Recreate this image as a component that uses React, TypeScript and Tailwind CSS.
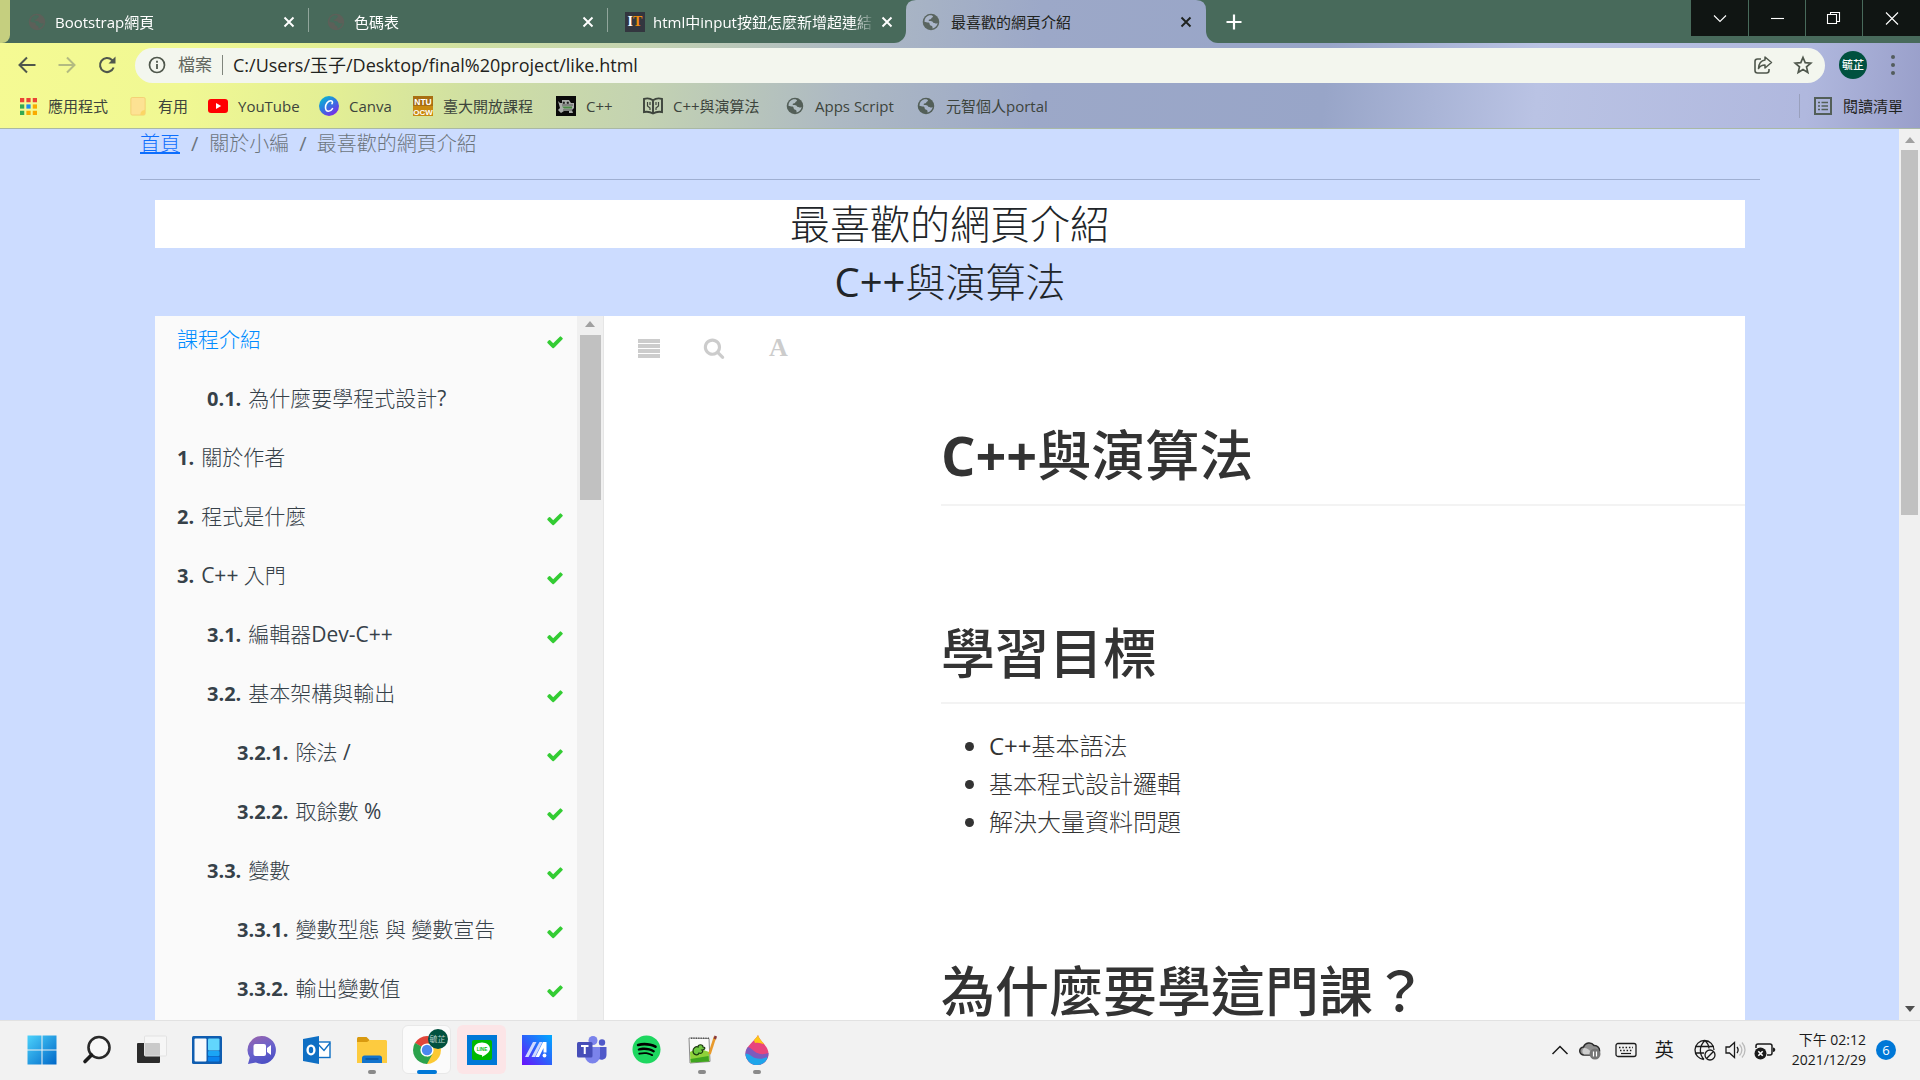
import type { ReactNode } from "react";
import { FaSpotify } from "react-icons/fa";

/* ---------- small glyphs ---------- */

function Globe({ className, land }: { className: string; land: string }) {
  return (
    <svg viewBox="0 0 20 20" className={className} aria-hidden="true">
      <circle cx="10" cy="10" r="9.2" fill="currentColor" />
      <path
        fill={land}
        d="M8 2.600c2-.6 4.600.1 4.200 1.600-.3 1-1.700.8-1.900 1.900-.2 1-1.400.9-2.300 1.200-1 .4-.8 1.600.2 1.700 1.600.1 3.400-.1 4 1.300.3.9 1.500.8 2.300 1.200.6.4 1.800.2 2.900-.4-.5 3-2.800 5.400-5.600 6.100-.3-1 .3-1.800-.6-2.600-1-.8-2.200-.4-2.600-1.700-.3-1.200-.2-2-1.400-2.300-1.500-.3-3.200-.3-4.500-1C2.700 6.400 4.900 3.500 8 2.600Z"
      />
    </svg>
  );
}

function CloseX({ className }: { className: string }) {
  return (
    <svg viewBox="0 0 12 12" className={className} aria-hidden="true">
      <path d="M1.500 1.500l9 9m0-9l-9 9" stroke="currentColor" strokeWidth="1.900" fill="none" />
    </svg>
  );
}

function ItLogo() {
  return (
    <span className="flex h-5 w-5 items-center justify-center bg-[#33363f] font-['Liberation_Serif',serif] text-sm leading-none font-bold text-white">
      I<span className="text-[#f08c10]">T</span>
    </span>
  );
}

/* Sets the Latin runs of a mixed title in their own weight. */
function Mixed({ text, latin }: { text: string; latin: string }) {
  return (
    <span className="whitespace-pre">
      {text.split(/([ -~]+)/).map((run, i) =>
        i % 2 ? (
          <span key={i} className={latin}>
            {run}
          </span>
        ) : (
          run
        ),
      )}
    </span>
  );
}

/* ---------- tab strip ---------- */

function Tab({ icon, title, last }: { icon: ReactNode; title: string; last?: boolean }) {
  return (
    <div className={`relative flex h-full items-center pl-[17px] ${last ? "w-[298px]" : "w-[299px]"}`}>
      <span className="flex w-5 shrink-0 justify-center">{icon}</span>
      <span className="ml-2 w-[222px] overflow-hidden [mask-image:linear-gradient(to_right,#000_90%,transparent)] text-[15px] leading-6 whitespace-nowrap text-white">
        {title}
      </span>
      <button aria-label="關閉分頁" className="ml-[6px] text-white">
        <CloseX className="h-3 w-3" />
      </button>
      {!last && <span className="absolute top-2 right-0 h-6 w-px bg-[#91a69c]" />}
    </div>
  );
}

function TabStrip() {
  return (
    <div className="flex h-[43px]">
      <div className="flex rounded-br-xl bg-[#486a5b]">
        <div className="h-[43px] w-[10px] rounded-br-lg bg-[#c5cf7f]" />
        <Tab icon={<Globe className="h-[18px] w-[18px] text-[#5c6059]" land="#486a5b" />} title="Bootstrap網頁" />
        <Tab icon={<Globe className="h-[18px] w-[18px] text-[#5c6059]" land="#486a5b" />} title="色碼表" />
        <Tab icon={<ItLogo />} title="html中input按鈕怎麼新增超連結" last />
      </div>
      <div className="relative flex w-[300px] items-center pl-4">
        <svg viewBox="0 0 10 10" className="absolute top-0 left-0 h-[10px] w-[10px]" aria-hidden="true">
          <path d="M0 0H10Q0 0 0 10Z" fill="#486a5b" />
        </svg>
        <svg viewBox="0 0 10 10" className="absolute top-0 right-0 h-[10px] w-[10px]" aria-hidden="true">
          <path d="M10 0H0Q10 0 10 10Z" fill="#486a5b" />
        </svg>
        <Globe className="h-[18px] w-[18px] text-[#5a6560]" land="#abb6ca" />
        <span className="ml-[11px] w-[222px] text-[15px] leading-6 whitespace-nowrap text-[#1f2320]">最喜歡的網頁介紹</span>
        <button aria-label="關閉分頁" className="ml-[7px] text-[#1f2320]">
          <CloseX className="h-3 w-3" />
        </button>
      </div>
      <div className="flex flex-1 items-center rounded-bl-xl bg-[#486a5b]">
        <button aria-label="新增分頁" className="ml-5 text-white">
          <svg viewBox="0 0 16 16" className="h-4 w-4">
            <path d="M8 .5v15M.5 8h15" stroke="currentColor" strokeWidth="2.200" />
          </svg>
        </button>
        <div className="ml-auto flex gap-px self-start text-white">
          {[
            ["搜尋分頁", "M9 12.500l6 6 6-6"],
            ["最小化", "M9 15.500h13"],
            ["還原", "M8.500 11.500h9v9h-9zM11.500 11.500v-2h9v9h-3"],
            ["關閉", "M9 9.500l12 12m0-12l-12 12"],
          ].map(([label, d]) => (
            <button key={label} aria-label={label} className="flex h-9 w-14 items-center justify-center bg-[#101513] last:w-[57px] first:w-[57px]">
              <svg viewBox="0 0 30 30" className="h-[30px] w-[30px]">
                <path d={d} stroke="currentColor" strokeWidth="1.100" fill="none" />
              </svg>
            </button>
          ))}
        </div>
      </div>
    </div>
  );
}

/* ---------- toolbar ---------- */

function Toolbar() {
  return (
    <div className="flex h-11 items-center pr-[17px] pl-[17px] text-[#4f574c]">
      <button aria-label="上一頁" className="w-5">
        <svg viewBox="0 0 20 20" className="h-5 w-5">
          <path d="M18.500 10H3M10 2.500L2.500 10l7.500 7.500" stroke="currentColor" strokeWidth="2" fill="none" />
        </svg>
      </button>
      <button aria-label="下一頁" className="ml-5 w-5 text-[#b3ba81]">
        <svg viewBox="0 0 20 20" className="h-5 w-5">
          <path d="M1.500 10H17M10 2.500l7.500 7.500-7.500 7.500" stroke="currentColor" strokeWidth="2" fill="none" />
        </svg>
      </button>
      <button aria-label="重新載入" className="ml-5 w-5">
        <svg viewBox="0 0 20 20" className="h-5 w-5">
          <path d="M16.600 12.500a7 7 0 1 1-1.600-7.400l2 2" stroke="currentColor" strokeWidth="2.100" fill="none" />
          <path d="M18.500 1.500v7h-7z" fill="currentColor" />
        </svg>
      </button>
      <div className="ml-[18px] flex h-[35px] flex-1 items-center rounded-full bg-[#f3f6ee] pr-3 pl-[13px]">
        <svg viewBox="0 0 18 18" className="h-[18px] w-[18px]" aria-hidden="true">
          <circle cx="9" cy="9" r="7.500" stroke="currentColor" strokeWidth="1.700" fill="none" />
          <path d="M9 8v5M9 4.800v1.900" stroke="currentColor" strokeWidth="1.800" />
        </svg>
        <label htmlFor="address" className="ml-3 text-[17px] leading-6 text-[#62675f]">
          檔案
        </label>
        <span className="mx-[10px] h-5 w-px bg-[#80857c]" />
        <input
          id="address"
          className="min-w-0 flex-1 bg-transparent text-lg leading-6 text-[#1f2320] outline-none"
          defaultValue="C:/Users/玉子/Desktop/final%20project/like.html"
        />
        <button aria-label="分享" className="mr-5">
          <svg viewBox="0 0 20 20" className="h-5 w-5">
            <path d="M8 4H4.500A2.500 2.500 0 0 0 2 6.500v9A2.500 2.500 0 0 0 4.500 18h9a2.500 2.500 0 0 0 2.500-2.500V14" stroke="currentColor" strokeWidth="1.600" fill="none" />
            <path d="M12 2l6.500 5.500L12 13v-3c-3 0-5 1-6.500 3.500C5.800 8.800 8 5.500 12 5z" stroke="currentColor" strokeWidth="1.500" fill="none" strokeLinejoin="round" />
          </svg>
        </button>
        <button aria-label="加入書籤">
          <svg viewBox="0 0 20 20" className="h-5 w-5">
            <path d="M10 2.500l2.200 5.200 5.600.5-4.300 3.700 1.300 5.500L10 14.500l-4.800 2.900 1.300-5.500L2.200 8.200l5.600-.5z" stroke="currentColor" strokeWidth="1.700" fill="none" />
          </svg>
        </button>
      </div>
      <button className="ml-[14px] h-7 w-7 rounded-full bg-[#00513f] text-center text-[11px] leading-7 font-medium whitespace-nowrap text-white">
        毓芷
      </button>
      <button aria-label="選單" className="ml-[16px] flex w-5 flex-col items-center gap-1">
        <span className="h-1 w-1 rounded-full bg-[#535d5d]" />
        <span className="h-1 w-1 rounded-full bg-[#535d5d]" />
        <span className="h-1 w-1 rounded-full bg-[#535d5d]" />
      </button>
    </div>
  );
}

/* ---------- bookmarks ---------- */

function Bookmark({ icon, label, className }: { icon: ReactNode; label: string; className: string }) {
  return (
    <a href="#" className={`flex shrink-0 items-center ${className}`}>
      <span className="flex w-5 justify-center">{icon}</span>
      <span className="ml-[10px] text-[15px] leading-6 whitespace-nowrap">{label}</span>
    </a>
  );
}

function AppsIcon() {
  const colours = ["#ea4335", "#ea4335", "#ea4335", "#34a853", "#1a8cf0", "#f9ab00", "#34a853", "#f9ab00", "#f9ab00"];
  return (
    <svg viewBox="0 0 16 16" className="h-[17px] w-[17px]" aria-hidden="true">
      {colours.map((c, i) => (
        <rect key={i} x={(i % 3) * 6} y={Math.floor(i / 3) * 6} width="4" height="4" fill={c} />
      ))}
    </svg>
  );
}

function Bookmarks() {
  return (
    <nav className="flex h-[42px] items-center border-b border-[#a9b8a5] pr-[17px] pb-[3px] pl-[18px] text-[#3d443c]">
      <Bookmark className="w-[110px]" icon={<AppsIcon />} label="應用程式" />
      <Bookmark
        className="w-[80px]"
        icon={
          <svg viewBox="0 0 16 20" className="h-[19px] w-4">
            <rect x=".5" y=".5" width="15" height="18.500" rx="1.500" fill="#fde293" stroke="#f3cf73" />
            <path d="M10.500 19c0-3 1-4.500 4.800-5.500V17c0 1.500-1 2-4.800 2Z" fill="#fbd565" />
          </svg>
        }
        label="有用"
      />
      <Bookmark
        className="w-[111px]"
        icon={
          <svg viewBox="0 0 20 14" className="h-[14px] w-5">
            <rect width="20" height="14" rx="3" fill="#f00" />
            <path d="M8 4l5.200 3L8 10z" fill="#fff" />
          </svg>
        }
        label="YouTube"
      />
      <Bookmark
        className="w-[94px]"
        icon={
          <svg viewBox="0 0 20 20" className="h-5 w-5">
            <defs>
              <linearGradient id="canva" x1="0" y1="0" x2=".7" y2="1">
                <stop offset="0" stopColor="#00c4cc" />
                <stop offset=".5" stopColor="#2b7de0" />
                <stop offset="1" stopColor="#7d2ae8" />
              </linearGradient>
            </defs>
            <circle cx="10" cy="10" r="10" fill="url(#canva)" />
            <path d="M13 7.600c.8-.9.700-2.800-1.100-2.900C9 4.600 6.500 8 6.500 11.300c0 2.500 1.200 4 3 4 1.700 0 3-1.100 4-2.700" stroke="#fff" strokeWidth="1.600" fill="none" strokeLinecap="round" />
          </svg>
        }
        label="Canva"
      />
      <Bookmark
        className="w-[143px]"
        icon={
          <svg viewBox="0 0 20 20" className="h-5 w-5">
            <rect width="20" height="20" fill="#a86e12" />
            <rect y="10" width="20" height="10" fill="#c98a10" />
            <text x="10" y="8.500" textAnchor="middle" fontSize="8.500" fontWeight="700" fontFamily="Liberation Sans" fill="#fff">NTU</text>
            <text x="10" y="18.500" textAnchor="middle" fontSize="8" fontWeight="700" fontFamily="Liberation Sans" fill="#fff">OCW</text>
          </svg>
        }
        label="臺大開放課程"
      />
      <Bookmark
        className="w-[87px]"
        icon={
          <svg viewBox="0 0 20 20" className="h-5 w-5">
            <rect width="20" height="20" fill="#0a0a0a" />
            <path d="M2 5l2 2h2V4h7l2 3h3v5l-2 2 1 3h-4v-2H8l-3 2-3-3 2-2z" fill="#a9ada9" />
            <path d="M6 10.500h10v2H8z" fill="#4a8a45" />
            <path d="M7 6h1.500v1.500H7zM11 6h1.500v1.500H11zM6 9h11M7 14h9" fill="#222" stroke="#222" strokeWidth=".6" />
          </svg>
        }
        label="C++"
      />
      <Bookmark
        className="w-[142px]"
        icon={
          <svg viewBox="0 0 20 18" className="h-[18px] w-5">
            <path d="M1 2c3-1 6-.8 9 1.200C13 1.200 16 1 19 2v13c-3-.6-6-.4-9 1.500C7 14.600 4 14.400 1 15zM10 3v13" stroke="currentColor" strokeWidth="1.900" fill="none" />
            <path d="M4.500 5v4l2.500 2v2M7 5v3M15.500 5v4L13 11v2M13 5v3" stroke="currentColor" strokeWidth="1.200" fill="none" />
          </svg>
        }
        label="C++與演算法"
      />
      <Bookmark className="w-[131px]" icon={<Globe className="h-[18px] w-[18px] text-[#535f58]" land="#b0bdc2" />} label="Apps Script" />
      <Bookmark className="" icon={<Globe className="h-[18px] w-[18px] text-[#535f58]" land="#a6b2c8" />} label="元智個人portal" />
      <div className="ml-auto flex items-center border-l border-[#99a0bd] pl-[13px] text-[#1f2320]">
        <svg viewBox="0 0 20 20" className="h-5 w-5 text-[#535f58]" aria-hidden="true">
          <path d="M2 2h16v16H2z" stroke="currentColor" strokeWidth="2" fill="none" />
          <path d="M5 6.500h2M5 10h2M5 13.500h2M8.500 6.500H15M8.500 10H15M8.500 13.500H15" stroke="currentColor" strokeWidth="1.500" />
        </svg>
        <button className="ml-[10px] text-[15px] leading-6">閱讀清單</button>
      </div>
    </nav>
  );
}

/* ---------- course book ---------- */

type Chapter = { no?: string; title: string; level: 0 | 1 | 2; done?: boolean };

const chapters: Chapter[] = [
  { title: "課程介紹", level: 0, done: true },
  { no: "0.1.", title: "為什麼要學程式設計?", level: 1 },
  { no: "1.", title: "關於作者", level: 0 },
  { no: "2.", title: "程式是什麼", level: 0, done: true },
  { no: "3.", title: "C++ 入門", level: 0, done: true },
  { no: "3.1.", title: "編輯器Dev-C++", level: 1, done: true },
  { no: "3.2.", title: "基本架構與輸出", level: 1, done: true },
  { no: "3.2.1.", title: "除法 /", level: 2, done: true },
  { no: "3.2.2.", title: "取餘數 %", level: 2, done: true },
  { no: "3.3.", title: "變數", level: 1, done: true },
  { no: "3.3.1.", title: "變數型態 與 變數宣告", level: 2, done: true },
  { no: "3.3.2.", title: "輸出變數值", level: 2, done: true },
];

const indent = ["pl-[22px]", "pl-[52px]", "pl-[82px]"];

function Check() {
  return (
    <svg viewBox="0 0 1792 1792" className="mt-1 ml-auto h-[18px] w-[18px] text-[#33cc33]" role="img" aria-label="已完成">
      <path
        fill="currentColor"
        d="M1671 566q0 40-28 68l-724 724-136 136q-28 28-68 28t-68-28l-136-136-362-362q-28-28-28-68t28-68l136-136q28-28 68-28t68 28l294 295 656-657q28-28 68-28t68 28l136 136q28 28 28 68z"
      />
    </svg>
  );
}

const heading = "text-[54px] leading-[76px] font-medium";

function Book() {
  return (
    <section className="mx-[15px] mt-[10px] flex min-h-0 flex-1 overflow-hidden bg-white">
      <ul className="w-[422px] shrink-0 bg-[#fafafa]">
        {chapters.map((c) => (
          <li key={c.title} className="h-[59px]">
            <a
              href="#"
              className={`flex h-12 items-center pr-[13px] text-[21px] font-light ${indent[c.level]} ${c.no ? "text-[#364149]" : "text-[#008cff]"}`}
            >
              {c.no && <b className="mr-[7px] text-xl font-bold">{c.no}</b>}
              <Mixed text={c.title} latin="font-normal" />
              {c.done && <Check />}
            </a>
          </li>
        ))}
      </ul>
      <div className="flex w-[27px] shrink-0 flex-col items-center border-r border-[#e6e6e6] bg-[#f0f0f0] pt-[5px]">
        <svg viewBox="0 0 10 6" className="h-[6px] w-[10px]" aria-hidden="true">
          <path d="M0 6L5 0l5 6z" fill="#a0a0a0" />
        </svg>
        <div className="mt-2 h-[165px] w-[21px] bg-[#c1c1c1]" />
      </div>
      <article className="min-w-0 flex-1 text-[#333]">
        <div className="flex h-16 items-center text-[#ccc]">
          <button aria-label="目錄" className="ml-[34px] flex w-[22px] flex-col gap-px">
            <span className="h-[4px] bg-[#ccc]" />
            <span className="h-[4px] bg-[#ccc]" />
            <span className="h-[4px] bg-[#ccc]" />
            <span className="h-[4px] bg-[#ccc]" />
          </button>
          <button aria-label="搜尋" className="ml-[43px]">
            <svg viewBox="0 0 1792 1792" className="h-[22px] w-[22px]">
              <path
                fill="currentColor"
                d="M1216 832q0-185-131.500-316.500t-316.500-131.500-316.500 131.500-131.500 316.500 131.500 316.500 316.500 131.500 316.500-131.500 131.500-316.500zm512 832q0 52-38 90t-90 38q-54 0-90-38l-343-342q-179 124-399 124-143 0-273.500-55.500t-225-150-150-225-55.500-273.500 55.500-273.500 150-225 225-150 273.500-55.500 273.500 55.500 225 150 150 225 55.500 273.500q0 220-124 399l343 343q37 37 37 90z"
              />
            </svg>
          </button>
          <button className="ml-[44px] font-['Liberation_Serif',serif] text-[26px] leading-none font-bold">A</button>
        </div>
        <div className="ml-[337px]">
          <h2 className={`mt-[26px] border-b-2 border-[#f3f3f3] pt-[11px] pb-[11px] ${heading}`}>
            <Mixed text="C++與演算法" latin="font-bold" />
          </h2>
          <h2 className={`mt-[98px] border-b-2 border-[#f3f3f3] pt-[11px] pb-[11px] ${heading}`}>學習目標</h2>
          <ul className="mt-[23px] list-disc pl-12 text-2xl leading-[38px] font-light">
            <li>
              <Mixed text="C++基本語法" latin="font-normal" />
            </li>
            <li>基本程式設計邏輯</li>
            <li>解決大量資料問題</li>
          </ul>
          <h2 className={`mt-[101px] pt-[11px] whitespace-nowrap ${heading}`}>為什麼要學這門課？</h2>
        </div>
      </article>
    </section>
  );
}

function PageView() {
  return (
    <div className="flex min-h-0 flex-1">
      <main className="flex min-h-0 min-w-0 flex-1 flex-col bg-[#ccdcff] pr-[139px] pl-[140px] text-[#212529]">
        <nav aria-label="breadcrumb" className="flex h-[51px] shrink-0 items-start border-b border-[#9fafd2] text-xl leading-[30px] font-light text-[#6c757d]">
          <a href="#" className="text-[#0d6efd] underline">首頁</a>
          <span className="px-[11px] font-normal">/</span>
          <span>關於小編</span>
          <span className="px-[10px] font-normal">/</span>
          <span>最喜歡的網頁介紹</span>
        </nav>
        <h1 className="mx-[15px] mt-5 shrink-0 bg-white text-center text-[40px] leading-[48px] font-light">最喜歡的網頁介紹</h1>
        <h1 className="mt-[10px] shrink-0 text-center text-[40px] leading-[48px] font-light">
          <Mixed text="C++與演算法" latin="font-normal" />
        </h1>
        <Book />
      </main>
      <div className="flex w-[21px] flex-col items-center bg-[#f0f0f0] py-2">
        <svg viewBox="0 0 10 6" className="h-[6px] w-[10px]" aria-hidden="true">
          <path d="M0 6L5 0l5 6z" fill="#a0a0a0" />
        </svg>
        <div className="mt-[7px] h-[365px] w-[17px] bg-[#c1c1c1]" />
        <svg viewBox="0 0 10 6" className="mt-auto h-[6px] w-[10px]" aria-hidden="true">
          <path d="M0 0l5 6 5-6z" fill="#505050" />
        </svg>
      </div>
    </div>
  );
}

/* ---------- taskbar ---------- */

function TaskIcon({ label, children, tile, mark }: { label: string; children: ReactNode; tile?: string; mark?: string }) {
  return (
    <button aria-label={label} className="relative flex h-full w-[55px] items-center justify-center">
      <span className={`flex h-[49px] w-[49px] items-center justify-center rounded-md ${tile ?? ""}`}>{children}</span>
      {mark && <span className={`absolute bottom-[4px] h-1 rounded-full ${mark}`} />}
    </button>
  );
}

const big = "h-[30px] w-[30px]";

function Taskbar() {
  return (
    <footer className="flex h-[60px] shrink-0 items-center border-t border-[#e2e2e2] bg-[#f2f2f2] pb-[2px] pl-[14px] text-[#1b1b1b]">
      <TaskIcon label="開始">
        <svg viewBox="0 0 30 30" className={big}>
          <defs>
            <linearGradient id="win" x1="0" y1="0" x2="1" y2="1">
              <stop offset="0" stopColor="#4cd2fb" />
              <stop offset="1" stopColor="#0067c8" />
            </linearGradient>
          </defs>
          <path d="M.5.5h14v14h-14zM15.500.5h14v14h-14zM.5 15.500h14v14h-14zM15.500 15.500h14v14h-14z" fill="url(#win)" />
        </svg>
      </TaskIcon>
      <TaskIcon label="搜尋">
        <svg viewBox="0 0 30 30" className={big}>
          <circle cx="17" cy="12.500" r="10.500" stroke="#2a2a2a" strokeWidth="2.600" fill="#f8f8f8" />
          <path d="M9.500 20L3 26.500" stroke="#1b1b1b" strokeWidth="3.600" strokeLinecap="round" />
        </svg>
      </TaskIcon>
      <TaskIcon label="工作檢視">
        <svg viewBox="0 0 30 30" className={big}>
          <rect y="8" width="23" height="20" rx="1" fill="#2b2b2b" />
          <rect x="7.500" y="1" width="22" height="20" rx="1" fill="#f7f7f7" fillOpacity=".78" stroke="#e2e2e2" />
        </svg>
      </TaskIcon>
      <TaskIcon label="小工具">
        <svg viewBox="0 0 30 30" className={big}>
          <rect y="1" width="30" height="28" rx="1.500" fill="#0f5db0" />
          <rect x="2.500" y="3.500" width="12" height="23" rx="1" fill="#f7f9fb" />
          <rect x="16" y="3.500" width="11.500" height="12" rx="1" fill="#62d6fd" />
          <rect x="16" y="16" width="11.500" height="5" rx="1" fill="#1ba5f5" />
          <rect x="16" y="21.500" width="11.500" height="5" rx="1" fill="#0a84ee" />
        </svg>
      </TaskIcon>
      <TaskIcon label="聊天">
        <svg viewBox="0 0 30 30" className={big}>
          <defs>
            <linearGradient id="chat" x1=".2" y1="0" x2=".6" y2="1">
              <stop offset="0" stopColor="#9663ae" />
              <stop offset=".5" stopColor="#6a62cc" />
              <stop offset="1" stopColor="#4b4fc4" />
            </linearGradient>
          </defs>
          <path d="M15 1a14 14 0 1 1-6.200 26.600L1 29l1.800-6.500A14 14 0 0 1 15 1Z" fill="url(#chat)" />
          <rect x="6.500" y="9" width="12.500" height="12" rx="2" fill="#fff" />
          <path d="M20 13l4-3v10l-4-3z" fill="#fff" />
        </svg>
      </TaskIcon>
      <TaskIcon label="Outlook">
        <svg viewBox="0 0 30 30" className={big}>
          <rect x="15" y="7" width="13" height="15.500" fill="#fff" stroke="#0f6fc4" strokeWidth="1.400" />
          <path d="M15 8l7 7.500L28 8" stroke="#0f6fc4" strokeWidth="1.400" fill="none" />
          <path d="M1 4l16-3v28L1 26z" fill="#0f6fc4" />
          <ellipse cx="9" cy="15" rx="3.400" ry="4.400" stroke="#fff" strokeWidth="2.400" fill="none" />
        </svg>
      </TaskIcon>
      <TaskIcon label="檔案總管" mark="w-2 bg-[#8a8a8a]">
        <svg viewBox="0 0 30 30" className={big}>
          <path d="M0 3.500C0 2.600.7 2 1.500 2h8l3 3v4H0z" fill="#d99a10" />
          <path d="M0 7h10l3-2h15.500c.8 0 1.500.6 1.500 1.500V28H0z" fill="#fdcb3f" />
          <path d="M5 28v-5c0-1.500 1-2.500 2.500-2.500h15c1.500 0 2.500 1 2.500 2.500v5z" fill="#1273cc" />
          <path d="M8.500 24h13" stroke="#0a4e94" strokeWidth="1.300" />
        </svg>
      </TaskIcon>
      <TaskIcon label="Google Chrome" tile="bg-[#fbfbfb] border border-[#e8e8e8]" mark="w-5 bg-[#0078d7]">
        <span className="relative">
          <svg viewBox="0 0 28 28" className="h-7 w-7">
            <path d="M14 14L1.900 7A14 14 0 0 1 26.100 7z" fill="#e0453a" />
            <path d="M14 14V28A14 14 0 0 1 1.900 7z" fill="#2ba24c" />
            <path d="M14 14l12.100-7A14 14 0 0 1 14 28z" fill="#fcc934" />
            <path d="M14 7.500h12.300L20 17z" fill="#fcc934" />
            <path d="M1.900 7L8 18l6-4z" fill="#2ba24c" />
            <path d="M8 17.500l6 3.500 5.700-3.500L14 28z" fill="#2ba24c" />
            <circle cx="14" cy="14" r="6.600" fill="#fff" />
            <circle cx="14" cy="14" r="5.200" fill="#4a87ee" />
          </svg>
          <span className="absolute -top-[7px] left-[15px] h-5 w-5 rounded-full bg-[#00513f] text-center text-[8px] leading-5 whitespace-nowrap text-[#b8d0c8]">
            毓芷
          </span>
        </span>
      </TaskIcon>
      <TaskIcon label="LINE" tile="bg-[#fce5e7]">
        <svg viewBox="0 0 30 30" className={big}>
          <rect width="30" height="30" fill="#0078d7" />
          <rect x="5" y="5" width="20" height="20" rx="2" fill="#00b900" />
          <path d="M15 7.500c4.500 0 8 2.800 8 6.300 0 3.200-4 6-8 8.200.3-1.300.2-1.900-.6-2-4.200-.3-7.400-3-7.400-6.200 0-3.500 3.500-6.300 8-6.300Z" fill="#fff" />
          <text x="15" y="15.700" textAnchor="middle" fontSize="4.600" fontWeight="700" fontFamily="Liberation Sans" fill="#00b900">LINE</text>
        </svg>
      </TaskIcon>
      <TaskIcon label="MyASUS">
        <svg viewBox="0 0 30 30" className={big}>
          <defs>
            <linearGradient id="asus" x1="0" y1="1" x2="1" y2="0">
              <stop offset="0" stopColor="#6a10fb" />
              <stop offset=".5" stopColor="#2c62fb" />
              <stop offset="1" stopColor="#00aaff" />
            </linearGradient>
          </defs>
          <rect width="30" height="30" fill="url(#asus)" />
          <path d="M3 22L11 7h3.500L6.500 22zM9.500 22l8-15h3l-7.500 15z" fill="#cfd9ff" />
          <path d="M13.500 22l7.500-15h3.500v10.500h-3V13L17 22z" fill="#fff" />
          <circle cx="22.500" cy="20.500" r="1.900" fill="#fff" />
        </svg>
      </TaskIcon>
      <TaskIcon label="Microsoft Teams">
        <svg viewBox="0 0 30 30" className={big}>
          <circle cx="16" cy="5.500" r="4.500" fill="#7b83eb" />
          <circle cx="25" cy="7.500" r="3.200" fill="#5059c9" />
          <path d="M20 12h9.500v8a5 5 0 0 1-9.500 2z" fill="#5059c9" />
          <path d="M8 12h15v9a7.500 7.500 0 0 1-15 0z" fill="#7b83eb" />
          <rect x="0" y="7" width="15.500" height="15.500" rx="1.500" fill="#464eb8" />
          <path d="M4 11h7.500M7.750 11v8" stroke="#fff" strokeWidth="2" />
        </svg>
      </TaskIcon>
      <TaskIcon label="Spotify">
        <span className="rounded-full bg-[radial-gradient(circle,#000_60%,transparent_61%)]">
          <FaSpotify className="h-[29px] w-[29px] text-[#1ed760]" />
        </span>
      </TaskIcon>
      <TaskIcon label="Notepad++" mark="w-2 bg-[#8a8a8a]">
        <svg viewBox="0 0 30 30" className={big}>
          <path d="M2 3l20 .5 1 23L3 28z" fill="#fafafa" stroke="#8a8a8a" />
          <path d="M3 17c5-3 12-3 19 0l.5 9-19 1.500z" fill="#8fd23a" />
          <path d="M3.500 24l18-3 .5 5.500-18 1z" fill="#3fa51f" />
          <path d="M6 16c0-3 3-5 5-4 0-3 5-3 5 0 3 0 2 3-1 3 2 2-1 4-3 3-1 3-6 2-6-2Z" fill="#6fc840" stroke="#1e3a12" strokeWidth="1.200" />
          <path d="M4 3.200h18" stroke="#555" strokeWidth="1.600" strokeDasharray="1.200 1.200" />
          <path d="M28 2l-5.500 17" stroke="#e89a2c" strokeWidth="2.600" />
          <path d="M28.800 1l-1 3" stroke="#8a3a3a" strokeWidth="2.600" />
        </svg>
      </TaskIcon>
      <TaskIcon label="小畫家 3D" mark="w-2 bg-[#8a8a8a]">
        <svg viewBox="0 0 30 30" className={big}>
          <defs>
            <clipPath id="drop">
              <path d="M16 0c1.500 6 10.500 11 10.500 18.500a11.500 11.500 0 0 1-23 0C3.500 11 13 6 16 0Z" />
            </clipPath>
          </defs>
          <g clipPath="url(#drop)">
            <rect width="30" height="30" fill="#e8457d" />
            <path d="M10 0h15v10c-5-1-7-3-12-2z" fill="#fdc816" />
            <path d="M0 13c4-3 9 0 12 3 5 4 10 4 18 1v13H0z" fill="#7d5bbd" />
            <path d="M0 19c6-2 9 2 13 4 4 1 8 1 12-1v8H0z" fill="#1fa5ea" />
          </g>
        </svg>
      </TaskIcon>

      <div className="ml-auto flex items-center pr-6">
        <button aria-label="顯示隱藏的圖示" className="w-5">
          <svg viewBox="0 0 20 20" className="h-5 w-5">
            <path d="M2.500 14L10 6.500l7.500 7.500" stroke="currentColor" strokeWidth="1.500" fill="none" />
          </svg>
        </button>
        <svg viewBox="0 0 22 20" className="ml-[9px] h-5 w-[22px]" aria-hidden="true">
          <path d="M5 15a4 4 0 0 1-.5-8A6 6 0 0 1 15 5.500 5 5 0 0 1 20.500 11c0 3-2 4-3.500 4z" fill="#8f8f8f" stroke="#2a2a2a" strokeWidth="1.500" />
          <path d="M5 14.500a4 4 0 0 1 0-6.500c3-.5 6 2 9 6.500z" fill="#cfcfcf" />
          <circle cx="16" cy="14" r="5.500" fill="#757575" />
          <path d="M14.500 11.500v5M17.500 11.500v5" stroke="#fff" strokeWidth="1.200" />
        </svg>
        <svg viewBox="0 0 22 16" className="ml-[14px] h-4 w-[22px]" aria-hidden="true">
          <rect x="1" y="1.500" width="20" height="13" rx="2" stroke="currentColor" strokeWidth="1.300" fill="none" />
          <path d="M4 5.500h14M5 8.500h13" stroke="currentColor" strokeWidth="1.500" strokeDasharray="1.500 1.800" />
          <path d="M6 11.500h10" stroke="currentColor" strokeWidth="1.200" />
        </svg>
        <button className="ml-[18px] text-[19px] leading-6">英</button>
        <svg viewBox="0 0 22 22" className="ml-[20px] h-[22px] w-[22px]" aria-hidden="true">
          <path d="M10 20.500a9.500 9.500 0 1 1 10-9.500M11 1.500C5 7 5 15 10 20.500M11 1.500c3 3 4 6 4 8M2 7.500h18M2 14h8" stroke="currentColor" strokeWidth="1.300" fill="none" />
          <circle cx="16" cy="16" r="5" stroke="currentColor" strokeWidth="1.300" fill="#f2f2f2" />
          <path d="M12.800 19.200l6.400-6.400" stroke="currentColor" strokeWidth="1.300" />
        </svg>
        <svg viewBox="0 0 22 20" className="ml-[8px] h-5 w-[22px]" aria-hidden="true">
          <path d="M2 7v6h3.500l5 4.500v-15L5.500 7z" stroke="currentColor" strokeWidth="1.300" fill="none" />
          <path d="M13 7c1.500 2 1.500 4 0 6" stroke="currentColor" strokeWidth="1.300" fill="none" />
          <path d="M15.500 4.500c3 3.500 3 7.500 0 11M18 2.500c4 4.500 4 10.500 0 15" stroke="#bbb" strokeWidth="1.300" fill="none" />
        </svg>
        <svg viewBox="0 0 22 20" className="ml-[8px] h-5 w-[22px]" aria-hidden="true">
          <path d="M2 8V6a2 2 0 0 1 2-2h12a2 2 0 0 1 2 2v7a2 2 0 0 1-2 2h-3" stroke="currentColor" strokeWidth="1.500" fill="none" />
          <path d="M19 7.500c3 0 3 4.500 0 4.500z" fill="currentColor" />
          <circle cx="6.500" cy="13.500" r="6" fill="currentColor" />
          <path d="M4.300 11.300l4.400 4.400m0-4.400l-4.400 4.400" stroke="#fff" strokeWidth="1.600" />
        </svg>
        <button className="ml-4 text-right text-sm leading-5 whitespace-nowrap">
          下午 02:12
          <br />
          2021/12/29
        </button>
        <button className="ml-[10px] h-5 w-5 rounded-full bg-[#0078d7] text-center text-[13px] leading-5 text-white">6</button>
      </div>
    </footer>
  );
}

export default function App() {
  return (
    <div className="flex h-screen flex-col overflow-hidden bg-white font-['Open_Sans','Noto_Sans_CJK_TC',sans-serif]">
      <header className="shrink-0 bg-[linear-gradient(95deg,#f5fa93_0%,#f0f893_10%,#e2ee95_18%,#cfdfa3_25%,#c3d2b2_34%,#adb9c3_44%,#9ca8c8_54%,#98a5c8_69%,#bac3e4_80%,#b0b8de_94%,#999fca_100%)]">
        <TabStrip />
        <Toolbar />
        <Bookmarks />
      </header>
      <PageView />
      <Taskbar />
    </div>
  );
}
